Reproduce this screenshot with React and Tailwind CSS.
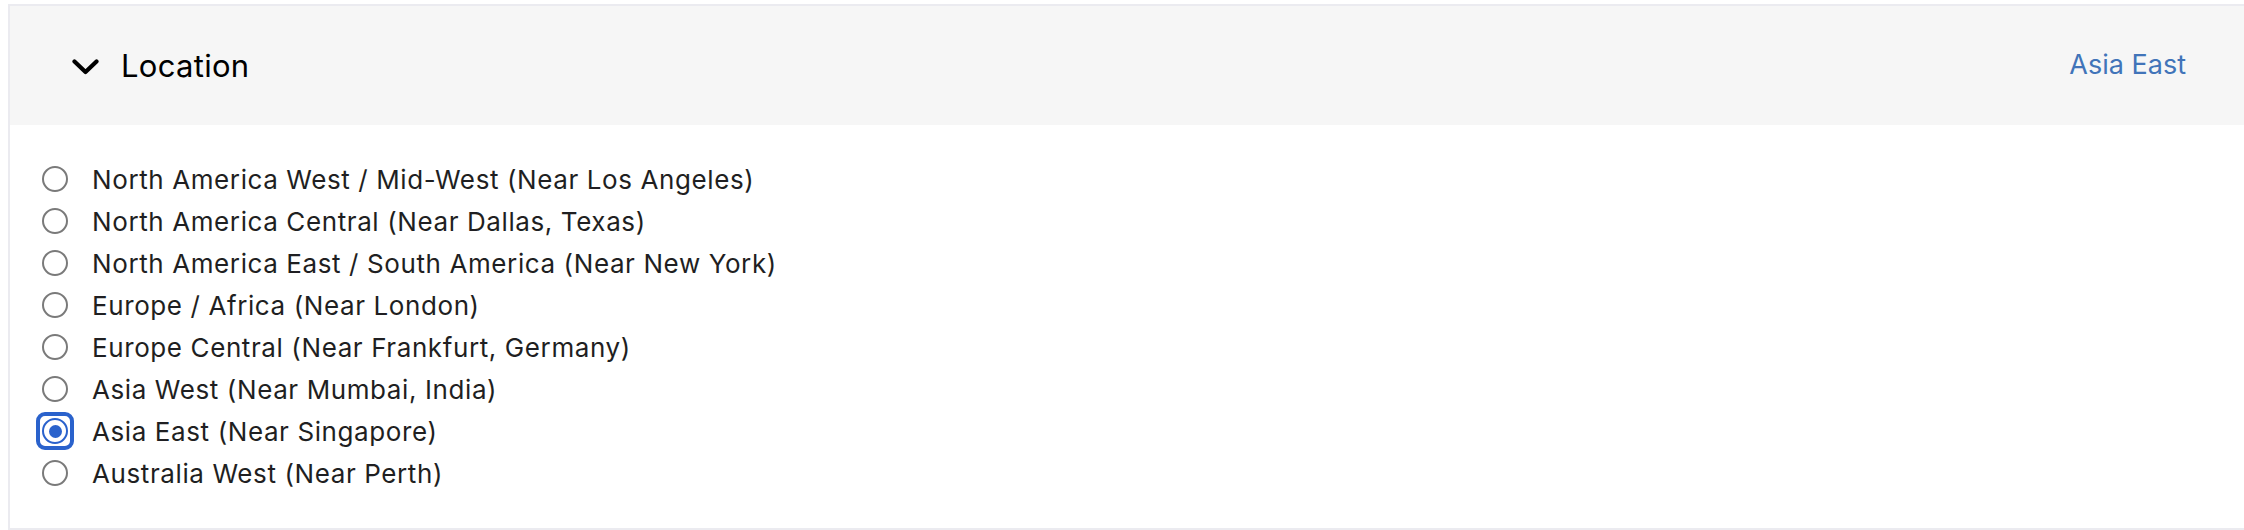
import { useState } from 'react'

const regions = [
  'North America West / Mid-West (Near Los Angeles)',
  'North America Central (Near Dallas, Texas)',
  'North America East / South America (Near New York)',
  'Europe / Africa (Near London)',
  'Europe Central (Near Frankfurt, Germany)',
  'Asia West (Near Mumbai, India)',
  'Asia East (Near Singapore)',
  'Australia West (Near Perth)',
]

function Radio({ checked }) {
  if (checked) {
    return (
      <span className="w-[38px] h-[38px] -mx-[6px] rounded-[9px] border-[4px] border-[#2a62cc] flex items-center justify-center shrink-0">
        <span className="w-[26px] h-[26px] rounded-full border-[2.5px] border-[#2a62cc] flex items-center justify-center">
          <span className="w-[13px] h-[13px] rounded-full bg-[#2a62cc]" />
        </span>
      </span>
    )
  }
  return <span className="w-[26px] h-[26px] rounded-full border-2 border-[#7a7a7a] bg-white shrink-0" />
}

export default function App() {
  const [selected, setSelected] = useState(6)

  return (
    <div className="w-full h-[530px] bg-white pt-[4px] pl-[8px]">
      <div className="h-[526px] border-l-2 border-t-2 border-b-2 border-[#ebebf0] flex flex-col">
        {/* Header */}
        <div className="h-[119px] bg-[#f6f6f6] flex items-center justify-between pl-[62px] pr-[58px] shrink-0" style={{ fontFamily: 'Inter, sans-serif' }}>
          <div className="flex items-center gap-[22px] pt-[2px]">
            <svg width="27" height="16" viewBox="0 0 27 16" fill="none">
              <path d="M2.5 2.5 L13.5 13 L24.5 2.5" stroke="#000" strokeWidth="4.2" strokeLinecap="round" strokeLinejoin="round" />
            </svg>
            <span className="text-[31px] text-black tracking-[0.3px]">Location</span>
          </div>
          <span className="text-[27px] text-[#4174b9]">Asia East</span>
        </div>

        {/* Options */}
        <div className="pt-[33px] pl-[32px] flex flex-col" style={{ fontFamily: 'Inter, "Liberation Sans", sans-serif' }}>
          {regions.map((r, i) => (
            <label
              key={r}
              onClick={() => setSelected(i)}
              className="h-[42px] flex items-center gap-[24px] cursor-pointer"
            >
              <Radio checked={selected === i} />
              <span className="text-[26px] text-[#1f1f22] tracking-[0.6px]">{r}</span>
            </label>
          ))}
        </div>
      </div>
    </div>
  )
}
